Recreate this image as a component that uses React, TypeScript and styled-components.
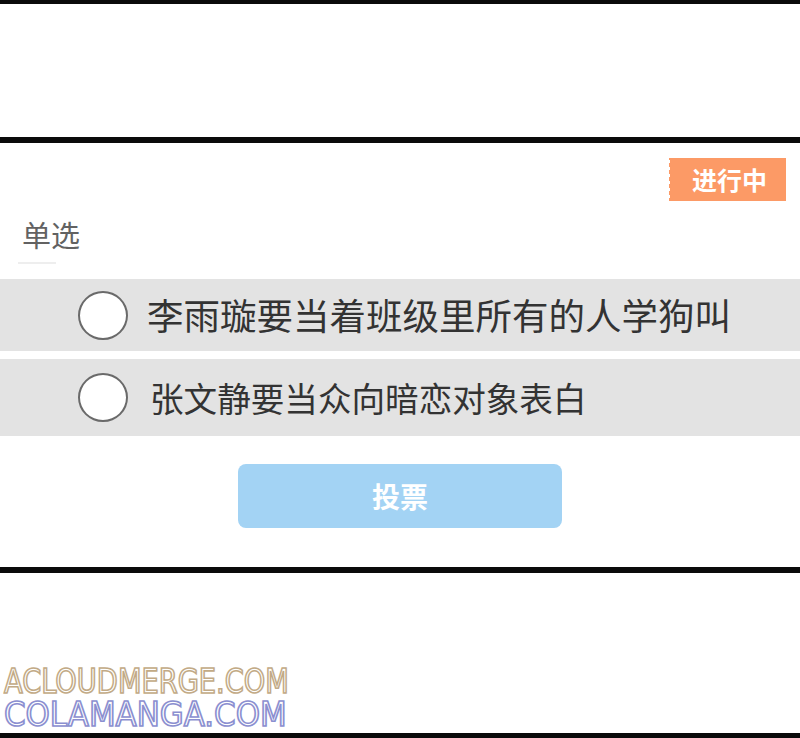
import React from 'react';
import styled, { createGlobalStyle } from 'styled-components';

const GlobalStyle = createGlobalStyle`
  body {
    margin: 0;
    background: #ffffff;
    font-family: "Noto Sans CJK SC", "Noto Sans", sans-serif;
  }
`;

const Page = styled.div`
  width: 800px;
  height: 738px;
  display: flex;
  flex-direction: column;
  overflow: hidden;
  background: #ffffff;
`;

const Rule = styled.div<{ $h: number }>`
  height: ${(p) => p.$h}px;
  background: #0a0a0a;
  flex-shrink: 0;
`;

const Spacer = styled.div<{ $h: number }>`
  height: ${(p) => p.$h}px;
  flex-shrink: 0;
`;

const Panel = styled.section`
  height: 424px;
  flex-shrink: 0;
  display: flex;
  flex-direction: column;
  padding-top: 15px;
  box-sizing: border-box;
`;

const BadgeRow = styled.div`
  display: flex;
  justify-content: flex-end;
  padding-right: 14px;
`;

const Badge = styled.div`
  position: relative;
  width: 117px;
  height: 43px;
  background: #fc9a66;
  color: #ffffff;
  font-size: 25px;
  font-weight: 700;
  line-height: 43px;
  text-align: center;
  padding-left: 4px;
  box-sizing: border-box;

  &::before {
    content: '';
    position: absolute;
    left: -2px;
    top: 0;
    width: 5px;
    height: 100%;
    background: radial-gradient(circle at 1px 3.5px, #ffffff 2px, transparent 2.5px) 0 0 / 5px 7px repeat-y;
  }
`;

const Title = styled.div`
  margin: 17px 0 0 22px;
  height: 32px;
  font-size: 29px;
  line-height: 32px;
  color: #626262;
`;

const FaintLine = styled.div`
  margin: 12px 0 0 18px;
  width: 38px;
  height: 2px;
  background: #eeeeee;
`;

const Options = styled.div`
  margin-top: 15px;
  display: flex;
  flex-direction: column;
  gap: 8px;
`;

const OptionRow = styled.label<{ $h: number; $gap: number }>`
  height: ${(p) => p.$h}px;
  background: #e3e3e3;
  display: flex;
  align-items: center;
  padding-left: 78px;
  gap: ${(p) => p.$gap}px;
`;

const Radio = styled.span`
  width: 50px;
  height: 49px;
  border-radius: 50%;
  border: 2px solid #6a6a6a;
  background: #ffffff;
  box-sizing: border-box;
  flex-shrink: 0;
`;

const OptionText = styled.span<{ $size: number }>`
  font-size: ${(p) => p.$size}px;
  color: #333333;
  line-height: 1;
`;

const VoteButton = styled.button`
  margin: 28px auto 0;
  width: 324px;
  height: 64px;
  border: none;
  border-radius: 8px;
  background: #a3d3f4;
  color: #ffffff;
  font-family: "Noto Sans CJK SC", sans-serif;
  font-size: 28px;
  font-weight: 700;
  display: block;
`;

const Footer = styled.div`
  height: 160px;
  flex-shrink: 0;
  display: flex;
  flex-direction: column;
  justify-content: flex-end;
  padding: 0 0 2px 4px;
  box-sizing: border-box;
`;

const Watermark = styled.div<{ $color: string; $w: number }>`
  font-family: "DejaVu Sans Condensed", "DejaVu Sans", sans-serif;
  font-size: 33px;
  line-height: 33px;
  height: 33px;
  color: transparent;
  -webkit-text-stroke: 1.6px ${(p) => p.$color};
  white-space: nowrap;
  transform-origin: left center;
  transform: scaleX(${(p) => p.$w});
`;

const options = [
  { text: '李雨璇要当着班级里所有的人学狗叫', size: 36.5, h: 72, gap: 19 },
  { text: '张文静要当众向暗恋对象表白', size: 33.6, h: 77, gap: 22 },
];

export default function App() {
  return (
    <Page>
      <GlobalStyle />
      <Rule $h={4} />
      <Spacer $h={133} />
      <Rule $h={6} />
      <Panel>
        <BadgeRow>
          <Badge>进行中</Badge>
        </BadgeRow>
        <Title>单选</Title>
        <FaintLine />
        <Options>
          {options.map((o) => (
            <OptionRow key={o.text} $h={o.h} $gap={o.gap}>
              <Radio />
              <OptionText $size={o.size}>{o.text}</OptionText>
            </OptionRow>
          ))}
        </Options>
        <VoteButton>投票</VoteButton>
      </Panel>
      <Rule $h={6} />
      <Footer>
        <Watermark $color="#c2aa86" $w={0.92}>ACLOUDMERGE.COM</Watermark>
        <Watermark $color="#8b8fd0" $w={1.04}>COLAMANGA.COM</Watermark>
      </Footer>
      <Rule $h={5} />
    </Page>
  );
}
